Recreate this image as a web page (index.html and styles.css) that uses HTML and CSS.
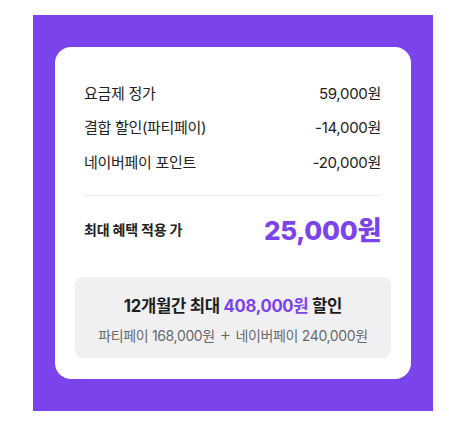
FILE: index.html
```html
<!DOCTYPE html>
<html lang="ko">
<head>
<meta charset="utf-8">
<link rel="stylesheet" href="styles.css">
</head>
<body>
<div class="frame">
  <div class="card">
    <div class="rows">
      <div class="row"><span>요금제 정가</span><span>59,000원</span></div>
      <div class="row"><span>결합 할인(파티페이)</span><span>-14,000원</span></div>
      <div class="row"><span>네이버페이 포인트</span><span>-20,000원</span></div>
    </div>
    <div class="divider"></div>
    <div class="total">
      <span class="total-label">최대 혜택 적용 가</span>
      <span class="total-price">25,000원</span>
    </div>
    <div class="summary">
      <div class="summary-title">12개월간 최대 <span class="accent">408,000원</span> 할인</div>
      <div class="summary-detail">파티페이 168,000원 <span class="plus">+</span> 네이버페이 240,000원</div>
    </div>
  </div>
</div>
</body>
</html>
```

FILE: styles.css
```css
* { box-sizing: border-box; }
html, body { margin: 0; padding: 0; background: #fff; }
body {
  font-family: Inter, "Noto Sans CJK KR", sans-serif;
  color: #222;
}
.frame {
  width: 400px;
  height: 396px;
  margin: 15px 0 0 33px;
  background: #7b43ec;
  padding: 32px 22px 32px 22px;
}
.card {
  background: #fff;
  border-radius: 16px;
  padding: 28px 20px 20px 20px;
  height: 332px;
}
.rows {
  margin: 0 10px 0 9px;
  display: flex;
  flex-direction: column;
}
.row {
  height: 34.5px;
  display: flex;
  justify-content: space-between;
  align-items: center;
  font-size: 15px;
  color: #222;
  letter-spacing: -0.3px;
}
.divider {
  margin: 16px 10px 0 9px;
  height: 1px;
  background: #ececec;
}
.total {
  margin: 15px 10px 0 9px;
  height: 36px;
  display: flex;
  justify-content: space-between;
  align-items: center;
}
.total-label {
  font-size: 14px;
  font-weight: 700;
  letter-spacing: -0.2px;
}
.total-price {
  font-size: 26px;
  font-weight: 800;
  color: #7b43ec;
  letter-spacing: -0.3px;
}
.summary {
  margin-top: 30px;
  background: #f0f0f2;
  border-radius: 8px;
  height: 81px;
  padding: 18px 0 13px;
  display: flex;
  flex-direction: column;
  align-items: center;
  gap: 8px;
}
.summary-title {
  height: 22px;
  line-height: 22px;
  font-size: 16.7px;
  font-weight: 700;
  color: #1e1e1e;
  letter-spacing: -0.3px;
}
.accent { color: #7b43ec; }
.summary-detail {
  height: 20px;
  line-height: 20px;
  font-size: 14px;
  color: #6a6a6a;
  letter-spacing: -0.35px;
}
.plus {
  font-weight: 300;
  font-size: 18px;
  margin: 0 1px;
  color: #666;
}
```
